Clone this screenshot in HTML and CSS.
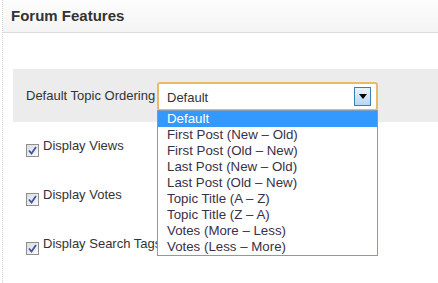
FILE: index.html
```
<!DOCTYPE html>
<html lang="en">

<head>
    <meta charset="UTF-8" />
    <title>Forum Features</title>
    <link rel="stylesheet" href="styles.css">
</head>

<body>
    <div class="panel">
        <div class="panel-head">
            <h2>Forum Features</h2>
        </div>

        <div class="panel-body">
            <div class="field-row">
                <label class="field-label">Default Topic Ordering</label>
                <div class="select">
                    <span class="select-value">Default</span>
                    <span class="select-arrow">
                        <svg width="8" height="5" viewBox="0 0 8 5"><path d="M0 0H8L4 5Z" fill="#000" /></svg>
                    </span>
                    <ul class="select-list">
                        <li class="selected">Default</li>
                        <li>First Post (New – Old)</li>
                        <li>First Post (Old – New)</li>
                        <li>Last Post (New – Old)</li>
                        <li>Last Post (Old – New)</li>
                        <li>Topic Title (A – Z)</li>
                        <li>Topic Title (Z – A)</li>
                        <li>Votes (More – Less)</li>
                        <li>Votes (Less – More)</li>
                    </ul>
                </div>
            </div>

            <div class="check-row">
                <span class="check"><svg width="9" height="9" viewBox="0 0 9 9"><path d="M1 4.5L3.5 7.5L8 1" fill="none" stroke="#3d56a6" stroke-width="1.8" /></svg></span>
                <span>Display Views</span>
            </div>
            <div class="check-row">
                <span class="check"><svg width="9" height="9" viewBox="0 0 9 9"><path d="M1 4.5L3.5 7.5L8 1" fill="none" stroke="#3d56a6" stroke-width="1.8" /></svg></span>
                <span>Display Votes</span>
            </div>
            <div class="check-row">
                <span class="check"><svg width="9" height="9" viewBox="0 0 9 9"><path d="M1 4.5L3.5 7.5L8 1" fill="none" stroke="#3d56a6" stroke-width="1.8" /></svg></span>
                <span>Display Search Tags</span>
            </div>
        </div>
    </div>
</body>

</html>
```

FILE: styles.css
```
* {
    margin: 0;
    padding: 0;
    box-sizing: border-box;
}

html,
body {
    height: 100%;
    background: #fff;
    font-family: "Liberation Sans", Arial, sans-serif;
    font-size: 13px;
    color: #333;
    overflow: hidden;
}

.panel {
    height: 100%;
    margin-left: 2px;
    border-left: 1px dotted #d4d4d4;
}

.panel-head {
    height: 33px;
    padding-left: 8px;
    border-bottom: 1px solid #dcdcdc;
    background: linear-gradient(#fdfdfd, #f4f4f4);
}

.panel-head h2 {
    font-size: 15px;
    font-weight: bold;
    color: #333;
    line-height: 32px;
}

.panel-body {
    padding: 36px 0 0 10px;
}

.field-row {
    display: flex;
    align-items: center;
    height: 53px;
    padding-left: 13px;
    background: #ececec;
}

.field-label {
    width: 131px;
    margin-top: -1px;
}

.select {
    position: relative;
    width: 221px;
    height: 29px;
    margin-top: 1px;
    display: flex;
    align-items: center;
    justify-content: space-between;
    padding: 0 5px 0 8px;
    background: #fff;
    border: 2px solid #e6bb6b;
    border-radius: 3px;
}

.select-value {
    padding-top: 2px;
}

.select-arrow {
    width: 17px;
    height: 19px;
    display: flex;
    align-items: center;
    justify-content: center;
    border: 1px solid #3c7fb1;
    background: linear-gradient(#eaf3fc, #b7d6f3);
}

.select-list {
    position: absolute;
    top: 26px;
    left: -2px;
    width: 221px;
    list-style: none;
    background: #fff;
    border: 1px solid #7f9db9;
}

.select-list li {
    height: 16px;
    line-height: 16px;
    padding-left: 9px;
    font-size: 13.3px;
    color: #3a3046;
}

.select-list li.selected {
    background: #3399ff;
    color: #fff;
}

.check-row {
    display: flex;
    align-items: flex-start;
    gap: 4px;
    height: 49px;
    padding: 16px 0 0 13px;
}

.check {
    width: 13px;
    height: 13px;
    margin-top: 6px;
    display: flex;
    align-items: center;
    justify-content: center;
    border: 1px solid #8f8f8f;
    background: linear-gradient(135deg, #dcdcdc, #fafafa);
}
```
